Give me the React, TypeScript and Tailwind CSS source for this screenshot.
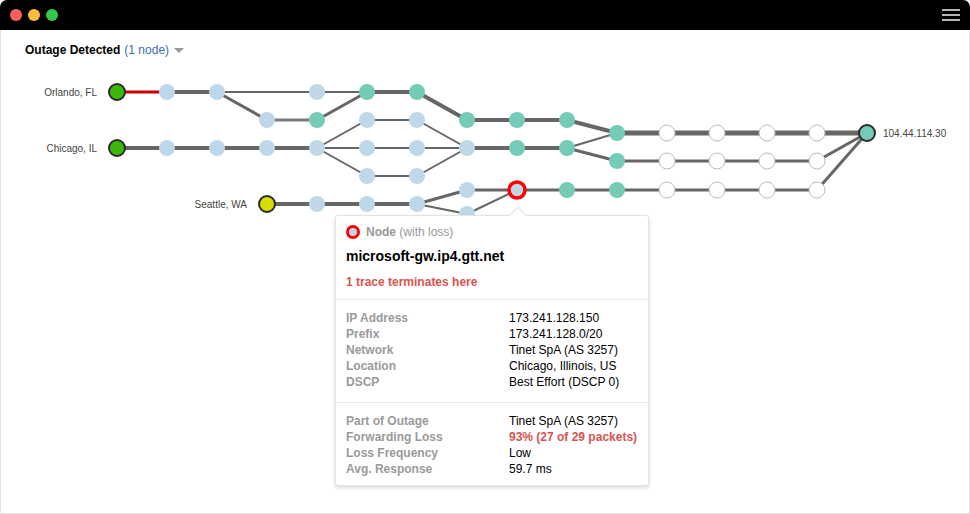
import React from 'react';

type Node = { x: number; y: number; kind: 'blue' | 'teal' | 'white' | 'green' | 'yellow' | 'dest' | 'loss' };
type Edge = [number, number, number, number, number, string?];

const BLUE = '#bfd8e9';
const TEAL = '#74cbb7';
const LINE = '#666666';

const nodes: Node[] = [
  // Orlando row
  { x: 117, y: 92, kind: 'green' },
  { x: 167, y: 92, kind: 'blue' },
  { x: 217, y: 92, kind: 'blue' },
  { x: 317, y: 92, kind: 'blue' },
  { x: 367, y: 92, kind: 'teal' },
  { x: 417, y: 92, kind: 'teal' },
  // row 120
  { x: 267, y: 120, kind: 'blue' },
  { x: 317, y: 120, kind: 'teal' },
  { x: 367, y: 120, kind: 'blue' },
  { x: 417, y: 120, kind: 'blue' },
  { x: 467, y: 120, kind: 'teal' },
  { x: 517, y: 120, kind: 'teal' },
  { x: 567, y: 120, kind: 'teal' },
  // Chicago row
  { x: 117, y: 148, kind: 'green' },
  { x: 167, y: 148, kind: 'blue' },
  { x: 217, y: 148, kind: 'blue' },
  { x: 267, y: 148, kind: 'blue' },
  { x: 317, y: 148, kind: 'blue' },
  { x: 367, y: 148, kind: 'blue' },
  { x: 417, y: 148, kind: 'blue' },
  { x: 467, y: 148, kind: 'blue' },
  { x: 517, y: 148, kind: 'teal' },
  { x: 567, y: 148, kind: 'teal' },
  // row 176
  { x: 367, y: 176, kind: 'blue' },
  { x: 417, y: 176, kind: 'blue' },
  // Seattle row
  { x: 267, y: 204, kind: 'yellow' },
  { x: 317, y: 204, kind: 'blue' },
  { x: 367, y: 204, kind: 'blue' },
  { x: 417, y: 204, kind: 'blue' },
  { x: 467, y: 214, kind: 'blue' },
  { x: 467, y: 190, kind: 'blue' },
  { x: 517, y: 190, kind: 'loss' },
  { x: 567, y: 190, kind: 'teal' },
  { x: 617, y: 190, kind: 'teal' },
  // right side
  { x: 617, y: 133, kind: 'teal' },
  { x: 617, y: 161, kind: 'teal' },
  ...[667, 717, 767, 817].flatMap((x) => [
    { x, y: 133, kind: 'white' as const },
    { x, y: 161, kind: 'white' as const },
    { x, y: 190, kind: 'white' as const },
  ]),
  { x: 867, y: 133, kind: 'dest' },
];

const edges: Edge[] = [
  [117, 92, 167, 92, 3, '#cc0000'],
  [167, 92, 217, 92, 4],
  [217, 92, 317, 92, 2],
  [217, 92, 267, 120, 3],
  [267, 120, 317, 120, 3, '#7a7a7a'],
  [317, 92, 367, 92, 2],
  [317, 120, 367, 92, 3],
  [367, 92, 417, 92, 4],
  [417, 92, 467, 120, 4],
  [467, 120, 517, 120, 4],
  [517, 120, 567, 120, 4],
  [567, 120, 617, 133, 4],
  [617, 133, 867, 133, 5],
  [117, 148, 317, 148, 4],
  [317, 148, 367, 120, 2],
  [317, 148, 367, 148, 2],
  [317, 148, 367, 176, 2],
  [367, 120, 417, 120, 2],
  [367, 148, 417, 148, 2],
  [367, 176, 417, 176, 2],
  [417, 120, 467, 148, 2],
  [417, 148, 467, 148, 2],
  [417, 176, 467, 148, 2],
  [467, 148, 567, 148, 4],
  [567, 148, 617, 133, 2],
  [567, 148, 617, 161, 3],
  [617, 161, 817, 161, 3],
  [817, 161, 867, 133, 3],
  [267, 204, 417, 204, 4],
  [417, 204, 467, 190, 3],
  [417, 204, 467, 214, 2],
  [467, 190, 517, 190, 3],
  [467, 214, 517, 190, 2],
  [517, 190, 817, 190, 3],
  [817, 190, 867, 133, 3],
];

function GraphNode({ n }: { n: Node }) {
  switch (n.kind) {
    case 'green':
      return <circle cx={n.x} cy={n.y} r={8} fill="#3db80a" stroke="#2b2b2b" strokeWidth={2} />;
    case 'yellow':
      return <circle cx={n.x} cy={n.y} r={8} fill="#d9dc00" stroke="#2b2b2b" strokeWidth={2} />;
    case 'dest':
      return <circle cx={n.x} cy={n.y} r={8} fill={TEAL} stroke="#2b2b2b" strokeWidth={2} />;
    case 'white':
      return <circle cx={n.x} cy={n.y} r={8} fill="#ffffff" stroke="#bdbdbd" strokeWidth={1} />;
    case 'loss':
      return <circle cx={n.x} cy={n.y} r={8} fill={BLUE} stroke="#ff0000" strokeWidth={3.5} />;
    case 'teal':
      return <circle cx={n.x} cy={n.y} r={8} fill={TEAL} />;
    default:
      return <circle cx={n.x} cy={n.y} r={8} fill={BLUE} />;
  }
}

function Graph() {
  return (
    <svg width={968} height={420} className="block">
      <g transform="translate(-1,-65)">
        {edges.map(([x1, y1, x2, y2, w, c], i) => (
          <line key={i} x1={x1} y1={y1} x2={x2} y2={y2} stroke={c ?? LINE} strokeWidth={w} />
        ))}
        {nodes.map((n, i) => (
          <GraphNode key={i} n={n} />
        ))}
        <g fontFamily="'Liberation Sans', Arial, sans-serif" fontSize={10} fill="#444">
          <text x={97} y={95.5} textAnchor="end">Orlando, FL</text>
          <text x={97} y={151.5} textAnchor="end">Chicago, IL</text>
          <text x={247} y={207.5} textAnchor="end">Seattle, WA</text>
          <text x={883} y={136.5}>104.44.114.30</text>
        </g>
      </g>
    </svg>
  );
}

const info = [
  ['IP Address', '173.241.128.150'],
  ['Prefix', '173.241.128.0/20'],
  ['Network', 'Tinet SpA (AS 3257)'],
  ['Location', 'Chicago, Illinois, US'],
  ['DSCP', 'Best Effort (DSCP 0)'],
];

const outage = [
  ['Part of Outage', 'Tinet SpA (AS 3257)', false],
  ['Forwarding Loss', '93% (27 of 29 packets)', true],
  ['Loss Frequency', 'Low', false],
  ['Avg. Response', '59.7 ms', false],
] as const;

function Tooltip() {
  return (
    <div className="absolute left-[334px] top-[185px] w-[314px] rounded-[3px] border border-[#e3e3e3] bg-white shadow-[0_2px_4px_rgba(0,0,0,0.15)] text-[12px]">
      <div className="absolute left-[176px] -top-[7px] h-[12px] w-[12px] rotate-45 border-l border-t border-[#e3e3e3] bg-white" />
      <div className="px-[10px] pt-[8px] pb-[9px]">
        <div className="flex h-[16px] items-center gap-[6px] text-[#999]">
          <span className="inline-block h-[14px] w-[14px] rounded-full border-[3px] border-[#ff0000] bg-[#bfd8e9]" />
          <span>
            <span className="font-bold">Node</span> (with loss)
          </span>
        </div>
        <div className="mt-[8px] h-[16px] text-[14px] font-bold leading-[16px] text-black">microsoft-gw.ip4.gtt.net</div>
        <div className="mt-[10px] h-[16px] font-bold leading-[16px] text-[#d9534f]">1 trace terminates here</div>
      </div>
      <div className="border-t border-[#ececec] px-[10px] pt-[10px] pb-[12px]">
        {info.map(([k, v]) => (
          <div key={k} className="flex h-[16px] leading-[16px]">
            <span className="w-[163px] font-bold text-[#9a9a9a]">{k}</span>
            <span className="text-black">{v}</span>
          </div>
        ))}
      </div>
      <div className="border-t border-[#ececec] px-[10px] pt-[10px] pb-[8px]">
        {outage.map(([k, v, red]) => (
          <div key={k} className="flex h-[16px] leading-[16px]">
            <span className="w-[163px] font-bold text-[#9a9a9a]">{k}</span>
            <span className={red ? 'font-bold text-[#d9534f]' : 'text-black'}>{v}</span>
          </div>
        ))}
      </div>
    </div>
  );
}

export default function App() {
  return (
    <div className="h-[514px] w-[970px] bg-white font-['Liberation_Sans',Arial,sans-serif]">
      <div className="flex h-[30px] items-center justify-between rounded-t-[7px] bg-black pl-[10px] pr-[10px]">
        <div className="flex gap-[6px]">
          <span className="h-[12px] w-[12px] rounded-full bg-[#fc605c]" />
          <span className="h-[12px] w-[12px] rounded-full bg-[#fdbc40]" />
          <span className="h-[12px] w-[12px] rounded-full bg-[#34c84a]" />
        </div>
        <div className="flex w-[18px] flex-col gap-[3px]">
          <span className="h-[2px] bg-[#b5b5b5]" />
          <span className="h-[2px] bg-[#b5b5b5]" />
          <span className="h-[2px] bg-[#b5b5b5]" />
        </div>
      </div>
      <div className="relative h-[484px] border-x border-b border-[#e2e2e2]">
        <div className="flex h-[35px] items-end gap-[4px] pb-[7px] pl-[24px] text-[12px] leading-[16px]">
          <span className="font-bold text-black">Outage Detected</span>
          <span className="text-[#3b6db3]">(1 node)</span>
          <span className="mb-[5px] ml-[1px] h-0 w-0 border-x-[5px] border-t-[5px] border-x-transparent border-t-[#999]" />
        </div>
        <Graph />
        <Tooltip />
      </div>
    </div>
  );
}
